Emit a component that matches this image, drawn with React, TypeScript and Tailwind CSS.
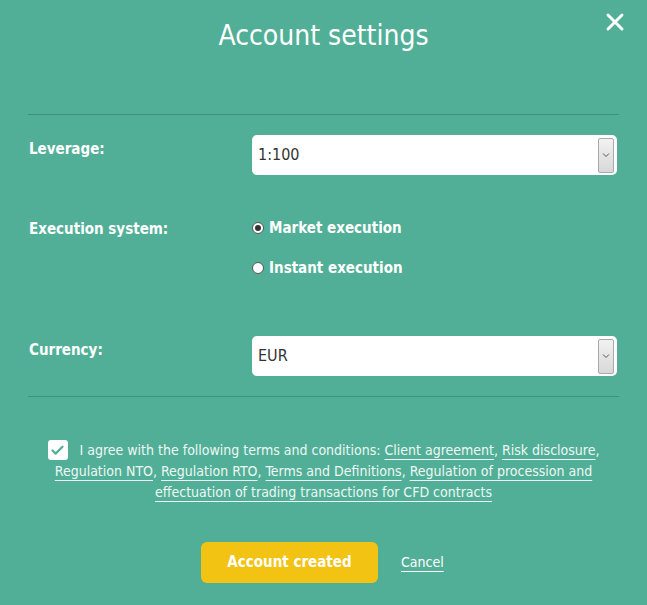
import { Fragment } from "react";
import { Check, X } from "lucide-react";

const font = { fontFamily: '"DejaVu Sans Condensed", "Liberation Sans Narrow", Roboto, sans-serif' };

function SelectBox({ value }: { value: string }) {
  return (
    <div className="flex h-10 w-[365px] items-center justify-between rounded-[5px] bg-white pl-[6px] pr-[3px]">
      <span className="text-[16px] text-[#333]">{value}</span>
      <div className="flex h-[35px] w-[16px] items-center justify-center rounded-[2px] border border-[#a9a9a9] bg-gradient-to-b from-[#f2f2f2] to-[#d8d8d8]">
        <svg width="8" height="6" viewBox="0 0 8 6" fill="none">
          <path d="M1 1.5l3 3 3-3" stroke="#555" strokeWidth="1" />
        </svg>
      </div>
    </div>
  );
}

function Radio({ checked, label }: { checked?: boolean; label: string }) {
  return (
    <label className="flex items-center gap-[5px]">
      <span className="flex h-[12px] w-[12px] items-center justify-center rounded-full border border-[#555] bg-white">
        {checked && <span className="h-[6px] w-[6px] rounded-full bg-[#333]" />}
      </span>
      <span className="text-[15px] font-bold text-white">{label}</span>
    </label>
  );
}

const links = ["Client agreement", "Risk disclosure", "Regulation NTO", "Regulation RTO", "Terms and Definitions"];

export default function App() {
  return (
    <div className="relative min-h-[605px] w-full bg-[#52af97] px-[28px] text-white" style={font}>
      <button className="absolute right-[18px] top-[8px] text-white">
        <X size={28} strokeWidth={2.5} />
      </button>
      <h1 className="pt-[18px] text-center text-[28px] font-light leading-[36px]">Account settings</h1>

      <div className="mt-[60px] border-t border-[#3d917d]" />

      <div className="mt-[20px] flex items-start">
        <div className="w-[224px] pl-[1px] pt-[3px] text-[15px] font-bold">Leverage:</div>
        <SelectBox value="1:100" />
      </div>

      <div className="mt-[42px] flex items-start">
        <div className="w-[224px] pl-[1px] text-[15px] font-bold leading-[24px]">Execution system:</div>
        <div className="flex flex-col gap-[17px]">
          <Radio checked label="Market execution" />
          <Radio label="Instant execution" />
        </div>
      </div>

      <div className="mt-[57px] flex items-start">
        <div className="w-[224px] pl-[1px] pt-[3px] text-[15px] font-bold">Currency:</div>
        <SelectBox value="EUR" />
      </div>

      <div className="mt-[20px] border-t border-[#3d917d]" />

      <p className="mt-[40px] px-[14px] text-center text-[14px] leading-[21px] text-[#eef7f4]">
        <span className="mr-[12px] inline-flex h-[20px] w-[20px] translate-y-[3px] items-center justify-center rounded-[3px] bg-white align-baseline">
          <Check size={15} strokeWidth={3.5} className="text-[#52af97]" />
        </span>
        I agree with the following terms and conditions:{" "}
        {links.map((l) => (
          <Fragment key={l}>
            <a className="underline decoration-1 underline-offset-[4px]">{l}</a>,{" "}
          </Fragment>
        ))}
        <a className="underline decoration-1 underline-offset-[4px]">
          Regulation of procession and effectuation of trading transactions for CFD contracts
        </a>
      </p>

      <div className="mt-[39px] flex items-center pl-[173px]">
        <button className="h-[41px] w-[177px] rounded-[6px] bg-[#f2c313] text-[15px] font-bold text-white">
          Account created
        </button>
        <a className="ml-[23px] text-[14px] leading-[17px] underline decoration-1 underline-offset-[4px]">Cancel</a>
      </div>
    </div>
  );
}
